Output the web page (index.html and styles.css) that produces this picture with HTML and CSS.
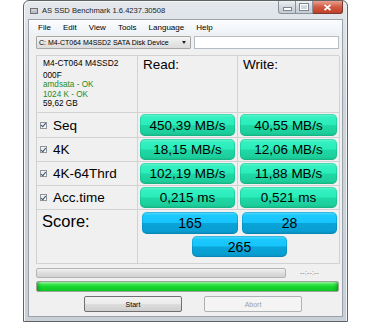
FILE: index.html
```html
<!DOCTYPE html>
<html>
<head>
<meta charset="utf-8">
<link rel="stylesheet" href="styles.css">
</head>
<body>
<div class="window">
  <div class="titlebar">
    <svg class="appicon" width="8" height="7" viewBox="0 0 8 7"><rect x="0.5" y="1.5" width="7" height="5" fill="#b9bcc0" stroke="#6e7276"/><rect x="1.5" y="2.5" width="5" height="1" fill="#e6e8ea"/></svg>
    <span class="title">AS SSD Benchmark 1.6.4237.30508</span>
    <div class="controls">
      <div class="cbtn cmin"><span class="dash"></span></div>
      <div class="cbtn cmax"><span class="sq"></span></div>
      <div class="cbtn cclose"><svg width="9" height="7" viewBox="0 0 9 7"><path d="M1.5 0.8 L7.5 6.2 M7.5 0.8 L1.5 6.2" stroke="#fff" stroke-width="1.8"/></svg></div>
    </div>
  </div>
  <div class="client">
    <div class="menubar">
      <span class="mi">File</span><span class="mi">Edit</span><span class="mi">View</span><span class="mi">Tools</span><span class="mi">Language</span><span class="mi">Help</span>
    </div>
    <div class="content">
      <div class="toolbar">
        <div class="combo"><span class="combo-text">C: M4-CT064 M4SSD2 SATA Disk Device</span><span class="arrow"></span></div>
        <div class="textbox"></div>
      </div>
      <div class="grid">
        <div class="cell info">
          <div class="model">M4-CT064 M4SSD2</div>
          <div>000F</div>
          <div class="ok">amdsata - OK</div>
          <div class="ok">1024 K - OK</div>
          <div>59,62 GB</div>
        </div>
        <div class="cell head">Read:</div>
        <div class="cell head">Write:</div>

        <div class="cell label"><span class="chk"></span>Seq</div>
        <div class="cell val"><div class="pill green">450,39 MB/s</div></div>
        <div class="cell val"><div class="pill green">40,55 MB/s</div></div>

        <div class="cell label"><span class="chk"></span>4K</div>
        <div class="cell val"><div class="pill green">18,15 MB/s</div></div>
        <div class="cell val"><div class="pill green">12,06 MB/s</div></div>

        <div class="cell label"><span class="chk"></span>4K-64Thrd</div>
        <div class="cell val"><div class="pill green">102,19 MB/s</div></div>
        <div class="cell val"><div class="pill green">11,88 MB/s</div></div>

        <div class="cell label"><span class="chk"></span>Acc.time</div>
        <div class="cell val"><div class="pill green">0,215 ms</div></div>
        <div class="cell val"><div class="pill green">0,521 ms</div></div>

        <div class="cell score-label">Score:</div>
        <div class="cell score">
          <div class="pill blue sread">165</div>
          <div class="pill blue swrite">28</div>
          <div class="pill blue stotal">265</div>
        </div>
      </div>
      <div class="progress-row">
        <div class="pbar"></div>
        <span class="time">--:--:--</span>
      </div>
      <div class="greenbar"></div>
      <div class="buttons">
        <div class="btn">Start</div>
        <div class="btn disabled">Abort</div>
      </div>
    </div>
  </div>
</div>
</body>
</html>
```
FILE: styles.css
```css
html, body {
  margin: 0;
  padding: 0;
  background: #ffffff;
}
body {
  font-family: "Liberation Sans", Arial, sans-serif;
  color: #000;
}
.window {
  margin-left: 23px;
  width: 325px;
  height: 322px;
  border: 1px solid #5f6366;
  border-radius: 6px 6px 0 0;
  background: linear-gradient(#e4e8ed, #cfd5dc 30%, #c9cfd6);
  padding: 0 4px 4px 4px;
  box-sizing: border-box;
  display: flex;
  flex-direction: column;
  box-shadow: inset 1px 1px 0 #f4f6f8, inset -1px 0 0 #f0f2f4;
}
.titlebar {
  height: 18px;
  display: flex;
  align-items: flex-start;
  position: relative;
}
.appicon {
  margin: 6px 0 0 2px;
}
.title {
  font-size: 7.6px;
  margin: 5px 0 0 4px;
  color: #1b1b1b;
}
.controls {
  margin-left: auto;
  margin-right: 0;
  display: flex;
  height: 13px;
}
.cbtn {
  height: 13px;
  box-sizing: border-box;
  border: 1px solid #8a9198;
  border-top: none;
  display: flex;
  align-items: center;
  justify-content: center;
}
.cmin {
  width: 18px;
  border-radius: 0 0 0 3px;
  background: linear-gradient(#eef1f4, #d2d8de 50%, #c3cad2);
}
.cmax {
  width: 17px;
  border-left: none;
  background: linear-gradient(#eef1f4, #d2d8de 50%, #c3cad2);
}
.cclose {
  width: 30px;
  border-left: none;
  border-color: #7a3a2e;
  border-radius: 0 0 3px 0;
  background: linear-gradient(#e9a08f, #d05a42 50%, #c0402a);
}
.dash {
  width: 7px;
  height: 2px;
  background: #fff;
  border: 1px solid #7d868f;
  margin-top: 4px;
}
.sq {
  width: 6px;
  height: 4px;
  border: 1px solid #fff;
  outline: 1px solid #7d868f;
}
.client {
  flex: 1;
  background: #f0f0f0;
  border: 1px solid #9aa3ac;
  display: flex;
  flex-direction: column;
}
.menubar {
  height: 14px;
  display: flex;
  align-items: center;
  background: linear-gradient(#fbfcfd, #eef2f7);
  padding-left: 3px;
  font-size: 8px;
}
.mi {
  padding: 0 6px;
}
.content {
  flex: 1;
  padding: 2px 0 0 7px;
  display: flex;
  flex-direction: column;
}
.toolbar {
  display: flex;
  height: 13px;
}
.combo {
  width: 155px;
  box-sizing: border-box;
  border: 1px solid #a6a6a6;
  border-radius: 1px;
  background: linear-gradient(#f6f6f6, #e6e6e6 50%, #dcdcdc);
  display: flex;
  align-items: center;
  padding-left: 2px;
  font-size: 7px;
}
.combo-text {
  flex: 1;
}
.arrow {
  width: 0;
  height: 0;
  border-left: 2.5px solid transparent;
  border-right: 2.5px solid transparent;
  border-top: 3px solid #222;
  margin-right: 4px;
}
.textbox {
  width: 145px;
  margin-left: 3px;
  box-sizing: border-box;
  border: 1px solid #b5bcc6;
  background: #fff;
}
.grid {
  margin-top: 6px;
  width: 303px;
  display: grid;
  grid-template-columns: 101px 100px 102px;
  grid-template-rows: 57px 25px 24px 24px 24px 54px;
  border-top: 1px solid #d2d2d2;
  border-left: 1px solid #d2d2d2;
  box-sizing: border-box;
}
.cell {
  border-right: 1px solid #d2d2d2;
  border-bottom: 1px solid #d2d2d2;
  box-sizing: border-box;
}
.info {
  padding: 2px 0 0 6px;
  font-size: 8.2px;
  line-height: 9.3px;
}
.info .model {
  margin-bottom: 3px;
  font-size: 8.4px;
  line-height: 10px;
}
.ok {
  color: #278a27;
}
.head {
  font-size: 13.5px;
  padding: 1px 0 0 5px;
}
.label {
  display: flex;
  align-items: center;
  font-size: 13.5px;
  padding-left: 3px;
}
.chk {
  width: 7px;
  height: 7px;
  box-sizing: border-box;
  border: 1px solid #8e959c;
  background: linear-gradient(#e9ecef, #fafbfc);
  margin-right: 6px;
  position: relative;
}
.chk::after {
  content: "";
  position: absolute;
  left: 1.3px;
  top: -0.2px;
  width: 2px;
  height: 3.5px;
  border-right: 1.2px solid #3a4a66;
  border-bottom: 1.2px solid #3a4a66;
  transform: rotate(40deg);
}
.val {
  padding: 1px 2px 1px 2px;
}
.pill {
  height: 100%;
  box-sizing: border-box;
  border-radius: 5px;
  display: flex;
  align-items: center;
  justify-content: center;
  font-size: 13.5px;
}
.green {
  background: linear-gradient(#6af7d3 0%, #34f0c0 15%, #2aedbb 48%, #1ed9a6 52%, #1ccf9c 85%, #17b98a 100%);
  box-shadow: inset 0 0 0 1px rgba(20, 170, 120, 0.35);
}
.blue {
  background: linear-gradient(#5edcff 0%, #1dcaff 15%, #17c4fb 48%, #0aa4d8 52%, #089fd2 85%, #0a8cbc 100%);
  box-shadow: inset 0 0 0 1px rgba(0, 120, 170, 0.35);
  font-size: 14px;
}
.score-label {
  font-size: 16.5px;
  padding: 2px 0 0 5px;
}
.score {
  grid-column: 2 / span 2;
  display: grid;
  grid-template-columns: 96px 95px;
  grid-template-rows: 22px 21px;
  column-gap: 4px;
  row-gap: 2px;
  padding: 2px 0 0 4px;
  border-right: 1px solid #d2d2d2;
}
.stotal {
  grid-column: 1 / span 2;
  width: 95px;
  justify-self: center;
}
.progress-row {
  display: flex;
  align-items: center;
  margin-top: 3px;
  height: 11px;
}
.pbar {
  width: 250px;
  height: 10px;
  box-sizing: border-box;
  border: 1px solid #b4b4b4;
  border-radius: 2px;
  background: linear-gradient(#f2f2f2, #dedede 50%, #d2d2d2);
}
.time {
  font-size: 6.5px;
  color: #777;
  margin-left: 14px;
  letter-spacing: 0.3px;
}
.greenbar {
  margin-top: 3px;
  width: 303px;
  height: 11px;
  box-sizing: border-box;
  border: 1px solid #9aa59a;
  border-radius: 2px;
  background: linear-gradient(#9ff4a6 0%, #3ee651 25%, #15d52c 55%, #12c628 100%);
  box-shadow: inset 4px 0 3px -2px rgba(0, 100, 0, 0.4), inset -4px 0 3px -2px rgba(0, 100, 0, 0.4);
}
.buttons {
  display: flex;
  margin-top: 4px;
  padding-left: 48px;
  gap: 22px;
}
.btn {
  width: 98px;
  height: 16px;
  box-sizing: border-box;
  border: 1px solid #707070;
  border-radius: 2px;
  background: linear-gradient(#f2f2f2, #ebebeb 50%, #dddddd 51%, #cfcfcf);
  font-size: 7px;
  display: flex;
  align-items: center;
  justify-content: center;
}
.btn.disabled {
  border-color: #adb2b5;
  background: #f4f4f4;
  color: #a0a0a0;
}
```
